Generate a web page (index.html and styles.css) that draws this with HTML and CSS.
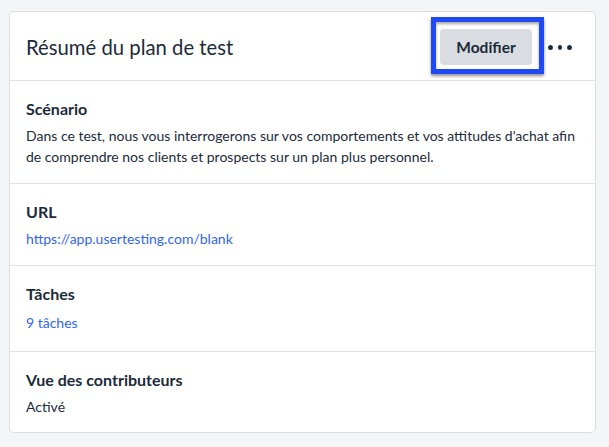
FILE: index.html
```html
<!DOCTYPE html>
<html lang="fr">
<head>
<meta charset="utf-8">
<title>Résumé du plan de test</title>
<link rel="stylesheet" href="styles.css">
</head>
<body>
<div class="card">
  <div class="card-header">
    <h1 class="card-title">Résumé du plan de test</h1>
    <div class="actions">
      <div class="btn-wrap">
        <button class="btn">Modifier</button>
        <span class="highlight"></span>
      </div>
      <span class="more"><i></i><i></i><i></i></span>
    </div>
  </div>
  <div class="section">
    <h2 class="section-title">Scénario</h2>
    <p class="section-body">Dans ce test, nous vous interrogerons sur vos comportements et vos attitudes d'achat afin de comprendre nos clients et prospects sur un plan plus personnel.</p>
  </div>
  <div class="section">
    <h2 class="section-title">URL</h2>
    <p class="section-body"><a class="link" href="#">https://app.usertesting.com/blank</a></p>
  </div>
  <div class="section section-tasks">
    <h2 class="section-title">Tâches</h2>
    <p class="section-body"><a class="link" href="#">9 tâches</a></p>
  </div>
  <div class="section">
    <h2 class="section-title">Vue des contributeurs</h2>
    <p class="section-body">Activé</p>
  </div>
</div>
</body>
</html>
```

FILE: styles.css
```css
html, body {
  margin: 0;
  padding: 0;
}
body {
  background: #f3f5f6;
  font-family: "Lato", "Liberation Sans", sans-serif;
  color: #1c2b3a;
  padding: 11px 13px 0 9px;
}
.card {
  background: #fff;
  border: 1px solid #dcdfe2;
  border-radius: 5px;
  width: 585px;
}
.card-header {
  display: flex;
  align-items: center;
  justify-content: space-between;
  height: 68px;
  padding: 0 23px 0 16px;
  border-bottom: 1px solid #dfe1e4;
}
.card-title {
  margin: 0;
  font-size: 20.3px;
  font-weight: 400;
  color: #1c2b3a;
  padding-top: 1px;
}
.actions {
  display: flex;
  align-items: center;
  gap: 16px;
  padding-top: 2px;
}
.btn-wrap {
  position: relative;
}
.btn {
  display: block;
  width: 92px;
  height: 36px;
  border: none;
  border-radius: 4px;
  background: #d9dce0;
  color: #1c2b3a;
  font-family: inherit;
  font-size: 15.5px;
  font-weight: 700;
  padding: 0;
}
.highlight {
  position: absolute;
  left: -9px;
  top: -12px;
  right: -12px;
  bottom: -9px;
  border: 5px solid #1f49f2;
  box-shadow: 0 2px 3px rgba(0,0,0,0.45), inset 0 2px 3px rgba(0,0,0,0.35);
  pointer-events: none;
}
.more {
  display: flex;
  gap: 5px;
  width: 24px;
  align-items: center;
}
.more i {
  display: block;
  width: 5px;
  height: 5px;
  border-radius: 50%;
  background: #1c2b3a;
}
.section {
  padding: 17px 10px 16px 16px;
  border-bottom: 1px solid #dfe1e4;
}
.section:last-child {
  border-bottom: none;
  padding-bottom: 15px;
}
.section-tasks {
  padding-bottom: 18px;
}
.section-tasks .section-body {
  margin-top: 7px;
}
.section-title {
  margin: 0;
  font-size: 16px;
  line-height: 22px;
  font-weight: 700;
  color: #1c2b3a;
}
.section-body {
  margin: 5px 0 0;
  font-size: 14px;
  line-height: 21px;
  color: #1c2b3a;
}
.link {
  color: #3166f0;
  text-decoration: none;
}
```
